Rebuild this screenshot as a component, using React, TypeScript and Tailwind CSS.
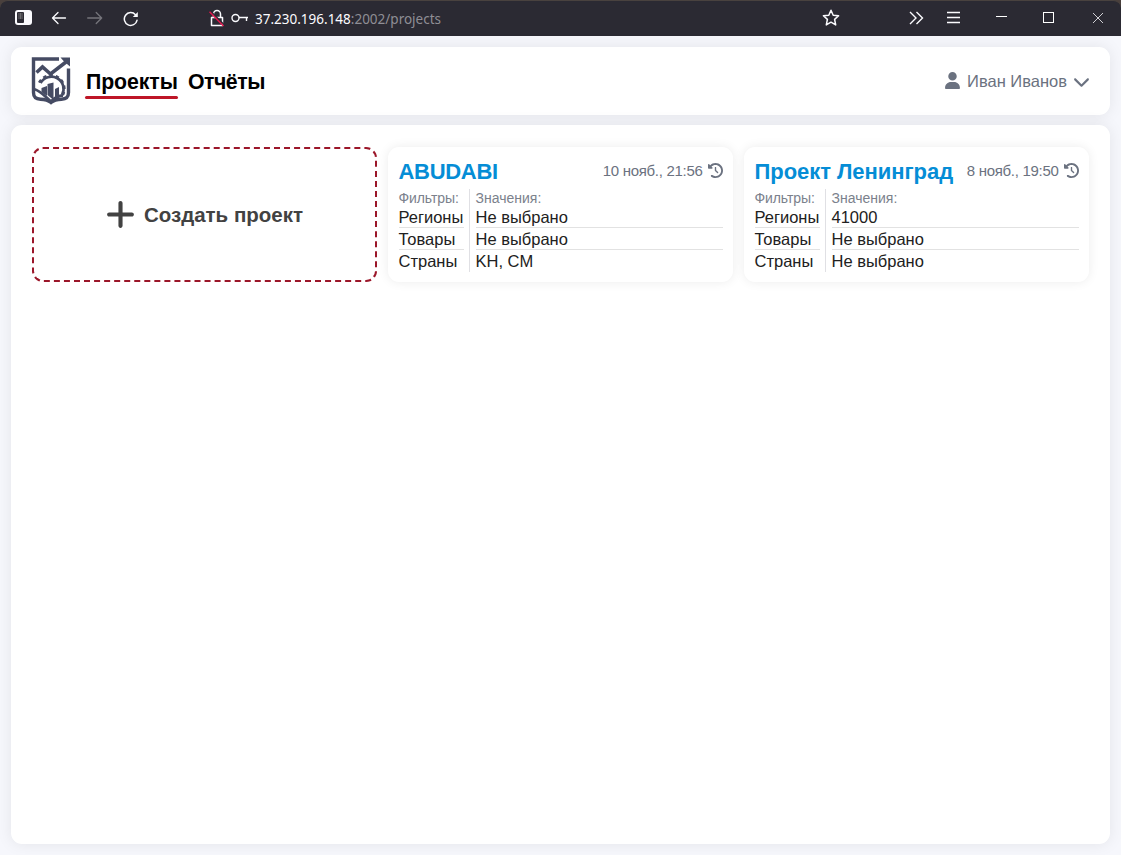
import React from "react";
import { FaChevronDown, FaClockRotateLeft, FaPlus, FaUser } from "react-icons/fa6";

type Project = { title: string; titleClass: string; date: string; values: string[] };

const projects: Project[] = [
  { title: "ABUDABI", titleClass: "tracking-[-0.3px]", date: "10 нояб., 21:56", values: ["Не выбрано", "Не выбрано", "KH, CM"] },
  { title: "Проект Ленинград", titleClass: "tracking-[-0.05px]", date: "8 нояб., 19:50", values: ["41000", "Не выбрано", "Не выбрано"] },
];
const filters = ["Регионы", "Товары", "Страны"];

function BrowserBar() {
  return (
    <div className="bg-[#4a403d]">
      <div className="flex h-9 items-center rounded-t-lg border-t border-[#49423f] bg-[#2b2a33] text-[#fbfbfe]">
        <svg className="-mt-[2px] ml-[15px] h-[15px] w-[17px] shrink-0" viewBox="0 0 17 15">
          <rect width="17" height="15" rx="3" fill="#fbfbfe" />
          <rect x="2" y="2" width="7" height="11" rx="1" fill="#2b2a33" />
          <path d="M3.500 4h4M3.500 6h4M3.500 8h4" stroke="#aaa" strokeWidth="1" strokeDasharray="1 .5" />
        </svg>
        <svg className="-mt-[1px] ml-[19px] h-4 w-4 shrink-0" viewBox="0 0 16 16" fill="none" stroke="#fbfbfe" strokeWidth="1.3" strokeLinecap="round" strokeLinejoin="round">
          <path d="M14.500 8H1.500M7 2.500L1.500 8l5.500 5.500" />
        </svg>
        <svg className="-mt-[1px] ml-5 h-4 w-4 shrink-0" viewBox="0 0 16 16" fill="none" stroke="#75747b" strokeWidth="1.3" strokeLinecap="round" strokeLinejoin="round">
          <path d="M.7 8h14M9.200 2.500L14.700 8l-5.500 5.500" />
        </svg>
        <svg className="ml-[20px] h-4 w-4 shrink-0" viewBox="0 0 16 16" fill="none" stroke="#fbfbfe" strokeWidth="1.5" strokeLinecap="round">
          <path d="M12.500 3.700A6.400 6.400 0 1 0 14 9.300" />
          <path d="M14.800 1v5H9.800z" fill="#fbfbfe" stroke="none" />
        </svg>
        <svg className="-mt-[1px] ml-[70px] h-[18px] w-4 shrink-0" viewBox="0 0 16 18" fill="none" stroke="#fbfbfe" strokeWidth="1.5">
          <path d="M4.500 9V5a3.500 3.500 0 0 1 7 0v4M2.500 8.500h11v8h-11z" strokeLinejoin="round" />
          <path d="M1.500 2L15.500 16" stroke="#2b2a33" strokeWidth="1.500" />
          <path d="M.5 2.800L14.500 17" stroke="#e2164c" strokeWidth="1.500" />
        </svg>
        <svg className="-mt-[2px] ml-[6px] h-4 w-[18px] shrink-0" viewBox="0 0 18 16" fill="none" stroke="#fbfbfe" strokeWidth="1.400">
          <circle cx="4.500" cy="8" r="3.500" />
          <path d="M8 7.500h9M15.500 7.500V11" />
        </svg>
        <div className="ml-[6px] mt-[1px] w-[200px] whitespace-nowrap font-['Noto_Sans',sans-serif] text-[13.500px] leading-5 text-[#8f8e95]">
          <span className="text-[#fbfbfe]">37.230.196.148</span>:2002/projects
        </div>
        <svg className="-mt-[2px] ml-auto mr-[68px] h-[18px] w-[18px] shrink-0" viewBox="0 0 18 18" fill="none" stroke="#fbfbfe" strokeWidth="1.500" strokeLinejoin="round">
          <path d="M9 1.300l2.200 4.900 5.400.6-4 3.600 1.100 5.500L9 13.200l-4.700 2.700 1.100-5.500-4-3.600 5.400-.6z" />
        </svg>
        <svg className="-mt-[2px] mr-[22px] h-4 w-4 shrink-0" viewBox="0 0 16 16" fill="none" stroke="#fbfbfe" strokeWidth="1.400">
          <path d="M2 2l6 6-6 6M8.500 2l6 6-6 6" />
        </svg>
        <svg className="-mt-[3px] mr-[35px] h-[15px] w-[15px] shrink-0" viewBox="0 0 15 15" stroke="#fbfbfe" strokeWidth="1.300">
          <path d="M1 2.500h13M1 7.500h13M1 12.500h13" />
        </svg>
        <svg className="-mt-[3px] mr-[36px] h-3 w-[11px] shrink-0" viewBox="0 0 11 12" stroke="#fff" shapeRendering="crispEdges">
          <path d="M0 5.500h11" />
        </svg>
        <svg className="-mt-[1px] mr-[37px] h-3 w-3 shrink-0" viewBox="0 0 12 12" fill="none" stroke="#fff" shapeRendering="crispEdges">
          <rect x=".5" y=".5" width="10" height="10" />
        </svg>
        <svg className="-mt-[2px] mr-[17px] h-3 w-3 shrink-0" viewBox="0 0 12 12" stroke="#d0d0d4">
          <path d="M1 1l10 10M11 1L1 11" />
        </svg>
      </div>
    </div>
  );
}

function Logo() {
  return (
    <svg className="h-[48px] w-[40px] shrink-0" viewBox="0 0 40 48" fill="none" stroke="#454b63">
      <path d="M28 2H2.500v33.500c0 5 2.500 6.500 7 6.700 5 .2 7.500.8 10.500 3.300 3-2.500 5.500-3.100 10.500-3.300 4.500-.2 7-1.700 7-6.700V11.500" strokeWidth="3.400" />
      <path d="M5.500 15.500l6-5.500 8 7L35 5" strokeWidth="3.600" />
      <path d="M29.500.5H39v9l-3-2.500-3-2.500z" fill="#454b63" stroke="none" />
      <path d="M9.500 26a11.500 11.500 0 0 1 21.500 12" strokeWidth="2.600" />
      <path d="M8 25.500a13 13 0 0 1 24 12.500" strokeWidth="2.200" strokeDasharray="3.500 3" />
      <path d="M10.500 31l5.500-2v10l-5.500-4zM16.500 27l6-1.500V43l-6-5zM24 32l4-2v8l-4 4z" fill="#454b63" stroke="none" />
      <path d="M3 32c7 2 11.500 8 17 12.500M20 44.500C23 41.500 27.500 38.500 32 38.500" strokeWidth="2.800" />
    </svg>
  );
}

function ProjectCard({ project }: { project: Project }) {
  return (
    <article className="flex h-[135px] flex-col rounded-[11px] bg-white px-[10.500px] pt-[10px] shadow-[0_0_11px_rgba(0,0,0,0.08)]">
      <div className="flex h-[28px] items-center justify-between whitespace-nowrap">
        <h2 className={`mt-[1px] text-[22px] font-bold text-[#058dd6] ${project.titleClass}`}>{project.title}</h2>
        <div className="-mt-[1px] flex items-center gap-[5px] text-[#6b7280]">
          <span className="mt-[2px] text-[15px] tracking-[-0.3px]">{project.date}</span>
          <FaClockRotateLeft className="size-[15px]" />
        </div>
      </div>
      <div className="mt-[4px] flex h-[83px] whitespace-nowrap text-[16.500px] text-[#212121]">
        <div className="w-[65px] shrink-0">
          <div className="h-[17px] text-[14px] leading-[19px] tracking-[-0.1px] text-[#7b818c]">Фильтры:</div>
          {filters.map((f, i) => (
            <div key={f} className={`h-[22px] leading-[22px] ${i < 2 ? "border-b border-[#e2e2e2]" : ""}`}>{f}</div>
          ))}
        </div>
        <div className="ml-[5px] mr-[6px] w-px shrink-0 bg-[#e0e0e4]" />
        <div className="grow">
          <div className="h-[17px] text-[14px] leading-[19px] text-[#7b818c]">Значения:</div>
          {project.values.map((v, i) => (
            <div key={i} className={`h-[22px] leading-[22px] ${i < 2 ? "border-b border-[#e2e2e2]" : ""}`}>{v}</div>
          ))}
        </div>
      </div>
    </article>
  );
}

export default function App() {
  return (
    <div className="flex h-[855px] w-[1121px] flex-col overflow-hidden bg-[#f6f7fc] font-['Liberation_Sans',Arial,sans-serif]">
      <BrowserBar />
      <div className="flex grow flex-col gap-[10px] px-[11px] pb-[11px] pt-[11px]">
        <header className="flex h-[68px] shrink-0 items-center rounded-[11px] bg-white pl-[20px] pr-[21px] shadow-[0_0_16px_rgba(0,0,0,0.08)]">
          <Logo />
          <nav className="ml-[14px] mt-[3px] flex gap-[10px] text-[21.300px] font-bold leading-[33px] text-black">
            <a className="relative h-[33px] w-[93px] px-px tracking-[-0.1px] after:absolute after:bottom-0 after:left-0 after:h-[3px] after:w-full after:rounded-full after:bg-[#be1627]">Проекты</a>
            <a className="tracking-[-0.5px]">Отчёты</a>
          </nav>
          <button className="ml-auto flex items-center gap-[6px] text-[16.500px] text-[#6b7280]">
            <FaUser className="-mt-[2px] size-[17px]" />
            <span>Иван Иванов</span>
            <FaChevronDown className="-mr-px size-[17px]" />
          </button>
        </header>
        <main className="grow rounded-[11px] bg-white px-[21px] pt-[22px] shadow-[0_0_16px_rgba(0,0,0,0.08)]">
          <div className="grid grid-cols-3 gap-[11px]">
            <button className="flex h-[135px] items-center justify-center gap-[7px] rounded-[11px] border-2 border-dashed border-[#9b1629] pr-[2px] text-[20.500px] font-bold text-[#424242]">
              <FaPlus className="-mt-[1px] size-[33px]" />
              <span className="mt-[2px]">Создать проект</span>
            </button>
            {projects.map((p) => (
              <ProjectCard key={p.title} project={p} />
            ))}
          </div>
        </main>
      </div>
    </div>
  );
}
